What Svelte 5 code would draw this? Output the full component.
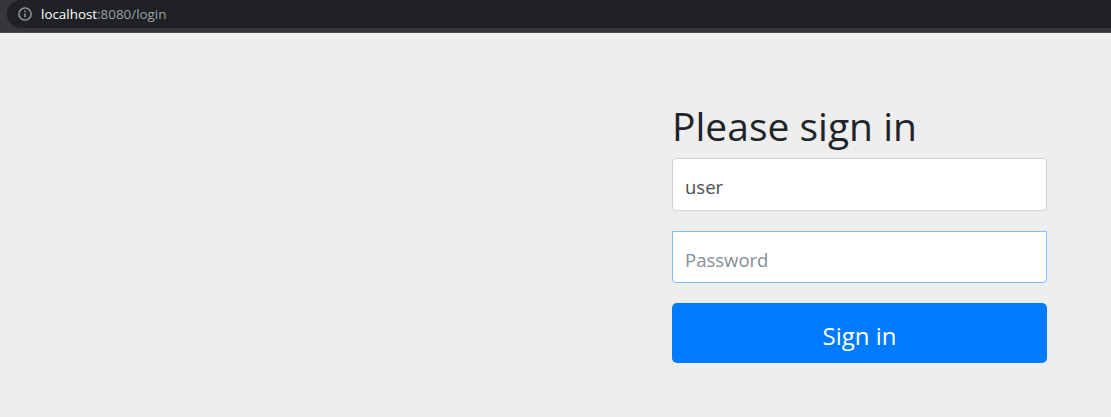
<script>
  let username = $state('user');
  let password = $state('');
</script>

<div class="page">
  <header>
    <div class="address">
      <svg width="14" height="14" viewBox="0 0 14 14" fill="none" stroke="#9aa0a6" stroke-width="1.4">
        <circle cx="7" cy="7" r="6.1" />
        <path d="M7 6.2V10.3M7 3.6V5" />
      </svg>
      <span class="url"><b>localhost</b>:8080/login</span>
    </div>
  </header>
  <main>
    <form>
      <h2><span class="fit">Please sign in</span></h2>
      <input class="user" type="text" bind:value={username} aria-label="Username" />
      <input class="pass" type="password" placeholder="Password" bind:value={password} />
      <button type="button">Sign in</button>
    </form>
  </main>
</div>

<style>
  :global(body) { margin: 0; background: #eee; }
  .page { height: 417px; overflow: hidden; background: #eee; font-family: "Segoe UI", "Open Sans", "Noto Sans", sans-serif; }
  header { box-sizing: border-box; height: 33px; background: #35363a; padding-left: 7px; border-bottom: 1px solid #4a4b4e; }
  .address { box-sizing: border-box; height: 28px; background: #202124; border-radius: 14px 0 0 14px; display: flex; align-items: center; gap: 9px; padding-left: 11px; }
  .url { font-size: 13.4px; line-height: 28px; color: #9aa0a6; }
  .url b { color: #fff; font-weight: 400; }
  main { padding: 69px 64px 0 672px; }
  form { display: flex; flex-direction: column; width: 375px; }
  h2 { margin: 0 0 8px; height: 48px; line-height: 48px; font-size: 39px; font-weight: 500; color: #212529; white-space: nowrap; }
  input { box-sizing: border-box; width: 375px; height: 53px; border: 1px solid #ced4da; border-radius: 4px; background: #fff; padding: 4px 12px 0; font: 400 18.5px "Segoe UI", "Open Sans", "Noto Sans", sans-serif; color: #495057; outline: none; }
  input::placeholder { color: #868e96; opacity: 1; }
  .pass { margin-top: 20px; height: 52px; border-color: #80bdff; border-radius: 0 0 4px 4px; }
  button { margin-top: 20px; height: 60px; border: 0; border-radius: 5px; background: #007bff; color: #fff; font: 400 24px "Segoe UI", "Open Sans", "Noto Sans", sans-serif; padding: 4px 0 0; }
</style>
